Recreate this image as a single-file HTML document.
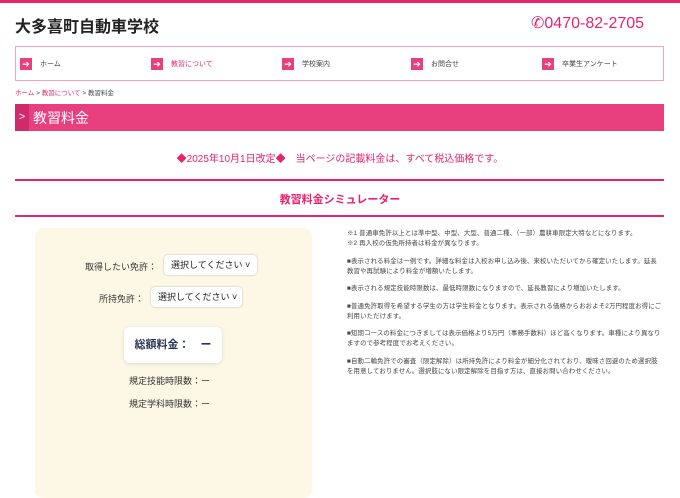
<!DOCTYPE html>
<html><head><meta charset="utf-8"><style>
*{margin:0;padding:0;box-sizing:border-box}
body{width:680px;height:480px;overflow:hidden;background:#fff;font-family:"Liberation Sans","Noto Sans CJK JP",sans-serif;color:#333;position:relative}
.a{position:absolute}
.topbar{left:0;top:0;width:680px;height:3px;background:#e6246e}
.nav{left:15px;top:46px;width:649px;height:35px;border:1.5px solid #f4a3c2;background:#fff}
.ni{position:absolute;top:11px;font-size:7px;color:#444;display:flex;align-items:center}
.ni i{display:inline-block;width:12px;height:12px;background:#e8407f;color:#fff;font-style:normal;font-size:9px;line-height:12px;text-align:center;margin-right:8px}
.h{left:15px;top:104px;width:649px;height:27px;background:#e8407f}
.h .s{position:absolute;left:0;top:0;width:14px;height:27px;background:#cf2a69;color:#fff;font-size:11px;line-height:26px;text-align:center}
.h span{position:absolute;left:18px;top:4px;color:#fff;font-size:14px}
.line{left:15px;width:649px;height:1.5px;background:#e6246e}
.card{left:35px;top:228px;width:277px;height:270px;background:#fdf8e6;border-radius:8px}
.sel{position:absolute;height:20px;background:#fff;border-radius:4px;box-shadow:0 0 2px rgba(0,0,0,.25);font-size:9px;line-height:20px;padding-left:7px;color:#222}
.notes{left:347px;top:229px;width:316px;font-size:6.4px;line-height:10px;color:#444;letter-spacing:0.15px}
.notes p{margin-bottom:7.5px}
</style></head><body>
<div class="a topbar"></div>
<div class="a" style="left:15px;top:13px;font-size:16px;font-weight:bold;color:#222">大多喜町自動車学校</div>
<div class="a" style="left:531px;top:13px;font-size:16px;color:#e6246e">✆0470-82-2705</div>
<div class="a nav">
<div class="ni" style="left:4px"><i>➔</i>ホーム</div>
<div class="ni" style="left:135px;color:#e6246e"><i>➔</i>教習について</div>
<div class="ni" style="left:266px"><i>➔</i>学校案内</div>
<div class="ni" style="left:395px"><i>➔</i>お問合せ</div>
<div class="ni" style="left:526px"><i>➔</i>卒業生アンケート</div>
</div>
<div class="a" style="left:15px;top:87px;font-size:6.5px;color:#444"><span style="color:#e6246e">ホーム</span> &gt; <span style="color:#e6246e">教習について</span> &gt; 教習料金</div>
<div class="a h"><div class="s">&gt;</div><span>教習料金</span></div>
<div class="a" style="left:0;width:680px;top:150px;text-align:center;font-size:10px;color:#e6246e">◆2025年10月1日改定◆　当ページの記載料金は、すべて税込価格です。</div>
<div class="a line" style="top:179px"></div>
<div class="a" style="left:0;width:680px;top:191px;text-align:center;font-size:11px;font-weight:bold;color:#e6246e">教習料金シミュレーター</div>
<div class="a line" style="top:215px"></div>
<div class="a card">
<div class="a" style="left:50px;top:32px;font-size:9px;color:#333">取得したい免許：</div>
<div class="sel" style="left:129px;top:27px;width:93px">選択してください ˅</div>
<div class="a" style="left:64px;top:64px;font-size:9px;color:#333">所持免許：</div>
<div class="sel" style="left:116px;top:59px;width:91px">選択してください ˅</div>
<div class="a" style="left:89px;top:99px;width:98px;height:36px;background:#fff;border-radius:6px;box-shadow:0 1px 4px rgba(0,0,0,.12);font-size:11px;font-weight:bold;color:#2a3550;line-height:36px;text-align:center">総額料金：　ー</div>
<div class="a" style="left:94px;top:146px;font-size:9px;color:#333">規定技能時限数：ー</div>
<div class="a" style="left:94px;top:169px;font-size:9px;color:#333">規定学科時限数：ー</div>
</div>
<div class="a notes">
<p>※1 普通車免許以上とは準中型、中型、大型、普通二種、（一部）農耕車限定大特などになります。<br>※2 再入校の仮免所持者は料金が異なります。</p>
<p>■表示される料金は一例です。詳細な料金は入校お申し込み後、来校いただいてから確定いたします。延長<br>教習や再試験により料金が増額いたします。</p>
<p>■表示される規定技能時限数は、最低時限数になりますので、延長教習により増加いたします。</p>
<p>■普通免許取得を希望する学生の方は学生料金となります。表示される価格からおおよそ2万円程度お得にご<br>利用いただけます。</p>
<p>■短期コースの料金につきましては表示価格より5万円（事務手数料）ほど高くなります。車種により異なり<br>ますので参考程度でお考えください。</p>
<p>■自動二輪免許での審査（限定解除）は所持免許により料金が細分化されており、曖昧さ回避のため選択肢<br>を用意しておりません。選択肢にない限定解除を目指す方は、直接お問い合わせください。</p>
</div>
</body></html>
